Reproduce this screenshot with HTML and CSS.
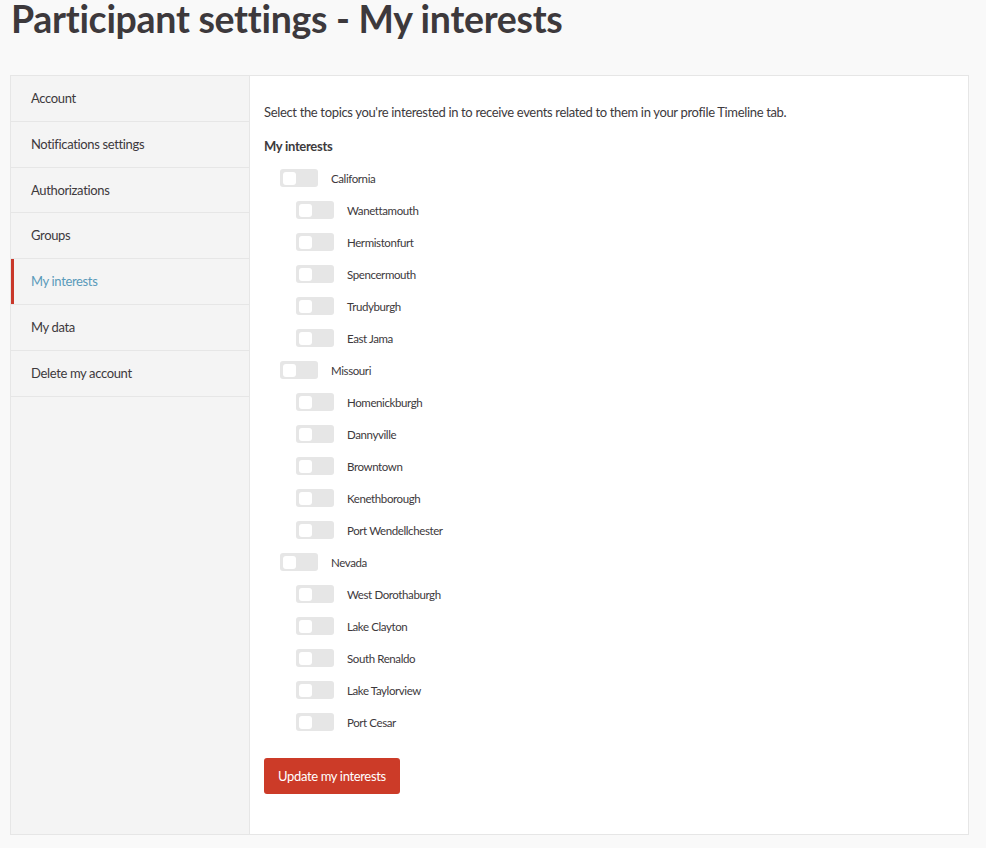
FILE: index.html
```html
<!DOCTYPE html>
<html>
<head>
<meta charset="utf-8">
<link rel="stylesheet" href="styles.css">
</head>
<body>
<h1 class="title">Participant settings - My interests</h1>
<div class="layout">
  <nav class="sidebar">
    <a class="nav-item">Account</a>
    <a class="nav-item">Notifications settings</a>
    <a class="nav-item short">Authorizations</a>
    <a class="nav-item">Groups</a>
    <a class="nav-item active">My interests</a>
    <a class="nav-item">My data</a>
    <a class="nav-item">Delete my account</a>
  </nav>
  <main class="panel">
    <p class="intro">Select the topics you're interested in to receive events related to them in your profile Timeline tab.</p>
    <h2 class="subtitle">My interests</h2>
    <ul class="topics">
      <li class="row parent"><span class="switch"><span class="knob"></span></span><span class="label">California</span></li>
      <li class="row child"><span class="switch"><span class="knob"></span></span><span class="label">Wanettamouth</span></li>
      <li class="row child"><span class="switch"><span class="knob"></span></span><span class="label">Hermistonfurt</span></li>
      <li class="row child"><span class="switch"><span class="knob"></span></span><span class="label">Spencermouth</span></li>
      <li class="row child"><span class="switch"><span class="knob"></span></span><span class="label">Trudyburgh</span></li>
      <li class="row child"><span class="switch"><span class="knob"></span></span><span class="label">East Jama</span></li>
      <li class="row parent"><span class="switch"><span class="knob"></span></span><span class="label">Missouri</span></li>
      <li class="row child"><span class="switch"><span class="knob"></span></span><span class="label">Homenickburgh</span></li>
      <li class="row child"><span class="switch"><span class="knob"></span></span><span class="label">Dannyville</span></li>
      <li class="row child"><span class="switch"><span class="knob"></span></span><span class="label">Browntown</span></li>
      <li class="row child"><span class="switch"><span class="knob"></span></span><span class="label">Kenethborough</span></li>
      <li class="row child"><span class="switch"><span class="knob"></span></span><span class="label">Port Wendellchester</span></li>
      <li class="row parent"><span class="switch"><span class="knob"></span></span><span class="label">Nevada</span></li>
      <li class="row child"><span class="switch"><span class="knob"></span></span><span class="label">West Dorothaburgh</span></li>
      <li class="row child"><span class="switch"><span class="knob"></span></span><span class="label">Lake Clayton</span></li>
      <li class="row child"><span class="switch"><span class="knob"></span></span><span class="label">South Renaldo</span></li>
      <li class="row child"><span class="switch"><span class="knob"></span></span><span class="label">Lake Taylorview</span></li>
      <li class="row child"><span class="switch"><span class="knob"></span></span><span class="label">Port Cesar</span></li>
    </ul>
    <button class="btn">Update my interests</button>
  </main>
</div>
</body>
</html>
```

FILE: styles.css
```css
html, body {
  margin: 0;
  padding: 0;
  background: #f9f9f9;
  font-family: "Lato", "Liberation Sans", sans-serif;
  color: #3d3a3d;
}

.title {
  margin: 0 0 0 11px;
  font-size: 37.5px;
  line-height: 38px;
  font-weight: 700;
  letter-spacing: -0.3px;
  color: #3d393c;
}

.layout {
  display: flex;
  margin: 37px 17px 0 10px;
  border: 1px solid #e6e6e6;
  height: 758px;
}

.sidebar {
  width: 238px;
  flex: none;
  background: #f4f4f4;
  border-right: 1px solid #e6e6e6;
  display: flex;
  flex-direction: column;
}

.nav-item {
  display: block;
  height: 45px;
  line-height: 45px;
  padding-left: 20px;
  font-size: 13px;
  letter-spacing: -0.35px;
  color: #3d393c;
  border-bottom: 1px solid #e6e6e6;
}

.nav-item.short {
  height: 44px;
  line-height: 44px;
}

.nav-item.active {
  color: #599aba;
  box-shadow: inset 3px 0 0 #c9382a;
}

.panel {
  flex: 1;
  background: #fff;
  padding: 27px 14px 0 14px;
}

.intro {
  margin: 0;
  font-size: 13px;
  line-height: 18px;
  letter-spacing: -0.34px;
}

.subtitle {
  margin: 16px 0 0;
  font-size: 13px;
  line-height: 18px;
  font-weight: 700;
  letter-spacing: -0.3px;
}

.topics {
  list-style: none;
  margin: 7px 0 0;
  padding: 0;
}

.row {
  display: flex;
  align-items: center;
  height: 32px;
  font-size: 11.5px;
  letter-spacing: -0.4px;
}

.row.parent { padding-left: 16px; }
.row.child { padding-left: 32px; }

.switch {
  width: 38px;
  height: 18px;
  border-radius: 3px;
  background: #e6e6e6;
  display: flex;
  align-items: center;
  padding-left: 3px;
  box-sizing: border-box;
  flex: none;
}

.knob {
  width: 13px;
  height: 13px;
  border-radius: 3px;
  background: #fff;
}

.label {
  margin-left: 13px;
  color: #3d393c;
}

.btn {
  margin-top: 20px;
  height: 36px;
  padding: 0 14px;
  border: none;
  border-radius: 3px;
  background: #cc3b28;
  color: #fff;
  font-family: inherit;
  font-size: 13px;
  letter-spacing: -0.35px;
}
```
